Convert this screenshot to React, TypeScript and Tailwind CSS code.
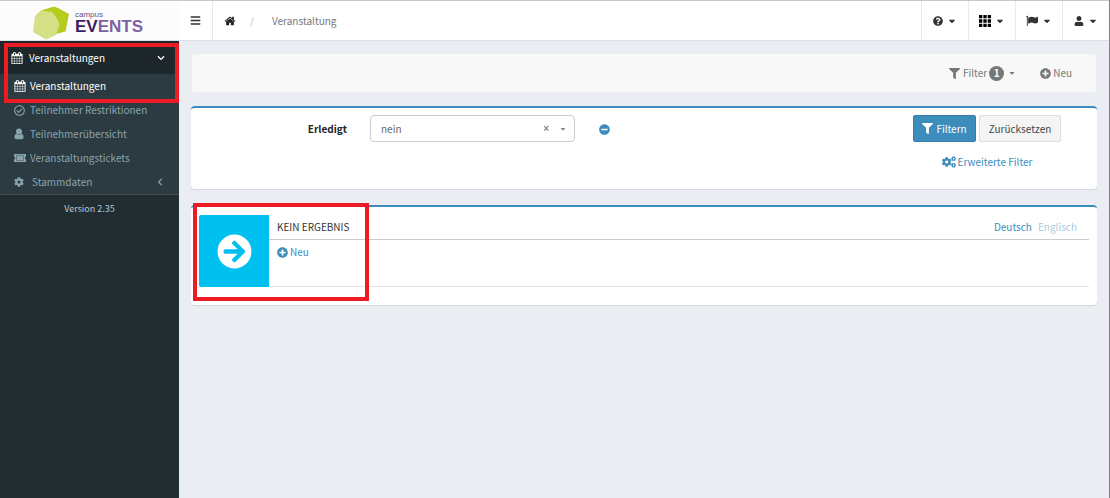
import type { ReactNode } from "react"
import {
  FaArrowCircleRight,
  FaBars,
  FaCaretDown,
  FaChevronDown,
  FaChevronLeft,
  FaCog,
  FaCogs,
  FaFilter,
  FaMinusCircle,
  FaPlusCircle,
  FaQuestionCircle,
  FaRegCheckCircle,
  FaUser,
} from "react-icons/fa"

function CalendarIcon({ className }: { className?: string }) {
  return (
    <svg viewBox="0 0 1664 1792" fill="currentColor" className={className} aria-hidden="true">
      <path d="M128 1664h288v-288h-288v288zm352 0h320v-288h-320v288zm-352-352h288v-320h-288v320zm352 0h320v-320h-320v320zm-352-384h288v-288h-288v288zm736 736h320v-288h-320v288zm-384-736h320v-288h-320v288zm768 736h288v-288h-288v288zm-384-352h320v-320h-320v320zm-352-864v-288q0-13-9.500-22.500t-22.500-9.500h-64q-13 0-22.500 9.500t-9.500 22.500v288q0 13 9.500 22.500t22.500 9.500h64q13 0 22.500-9.500t9.500-22.500zm736 864h288v-320h-288v320zm-384-384h320v-288h-320v288zm384 0h288v-288h-288v288zm32-480v-288q0-13-9.500-22.500t-22.500-9.500h-64q-13 0-22.500 9.500t-9.500 22.500v288q0 13 9.500 22.500t22.500 9.500h64q13 0 22.500-9.500t9.500-22.500zm384-64v1280q0 52-38 90t-90 38h-1408q-52 0-90-38t-38-90v-1280q0-52 38-90t90-38h128v-96q0-66 47-113t113-47h64q66 0 113 47t47 113v96h384v-96q0-66 47-113t113-47h64q66 0 113 47t47 113v96h128q52 0 90 38t38 90z" />
    </svg>
  )
}

function HomeIcon({ className }: { className?: string }) {
  return (
    <svg viewBox="0 0 1792 1792" fill="currentColor" className={className} aria-hidden="true">
      <path d="M1472 992v480q0 26-19 45t-45 19h-384v-384h-256v384h-384q-26 0-45-19t-19-45v-480q0-1 .5-3t.5-3l575-474 575 474q1 2 1 6zm223-69l-62 74q-8 9-21 11h-3q-13 0-21-7l-692-577-692 577q-12 8-24 7-13-2-21-11l-62-74q-8-10-7-23.500t11-21.500l719-599q32-26 76-26t76 26l244 204v-195q0-14 9-23t23-9h192q14 0 23 9t9 23v408l219 182q10 8 11 21.500t-7 23.500z" />
    </svg>
  )
}

function FlagIcon({ className }: { className?: string }) {
  return (
    <svg viewBox="0 0 1792 1792" fill="currentColor" className={className} aria-hidden="true">
      <path d="M320 256q0 72-64 110v1266q0 13-9.500 22.500t-22.500 9.500h-64q-13 0-22.500-9.500t-9.500-22.500v-1266q-64-38-64-110 0-53 37.500-90.500t90.500-37.500 90.500 37.500 37.500 90.500zm1472 64v763q0 25-12.500 38.500t-39.500 27.500q-215 116-369 116-61 0-123.500-22t-108.500-48-115.500-48-142.500-22q-192 0-464 146-17 9-33 9-26 0-45-19t-19-45v-742q0-32 31-55 21-14 79-43 236-120 421-120 107 0 200 29t219 88q38 19 88 19 54 0 117.500-21t110-47 88-47 54.500-21q26 0 45 19t19 45z" />
    </svg>
  )
}

function GridIcon({ className }: { className?: string }) {
  return (
    <svg viewBox="0 0 12 12" fill="currentColor" className={className} aria-hidden="true">
      <path d="M0 0h3.300v3.300H0zM4.350 0h3.300v3.300h-3.300zM8.700 0H12v3.300H8.700zM0 4.350h3.300v3.300H0zM4.350 4.350h3.300v3.300h-3.300zM8.700 4.350H12v3.300H8.700zM0 8.700h3.300V12H0zM4.350 8.700h3.300V12h-3.300zM8.700 8.700H12V12H8.700z" />
    </svg>
  )
}

function TicketIcon({ className }: { className?: string }) {
  return (
    <svg viewBox="0 0 12 8" className={className} aria-hidden="true">
      <path d="M0 0h12v2.500a1 1.500 0 0 0 0 3V8H0V5.500a1 1.500 0 0 0 0-3z" fill="currentColor" />
      <path d="M2.500 1.500h7v5h-7z" fill="none" stroke="#2c3b41" strokeWidth=".4" />
    </svg>
  )
}

function PersonIcon({ className }: { className?: string }) {
  return (
    <svg viewBox="0 0 10 12" fill="currentColor" className={className} aria-hidden="true">
      <circle cx="5" cy="3.600" r="3" />
      <path d="M2.500 5.800C1 6 .5 7.500.5 9.500c0 1 .6 1.700 1.600 1.700h5.800c1 0 1.600-.7 1.600-1.700 0-2-.5-3.500-2-3.700C6.200 7.200 3.800 7.200 2.500 5.800z" />
    </svg>
  )
}

function Logo() {
  return (
    <a href="#" aria-label="campus EVENTS" className="flex h-full items-center gap-1.5 pl-8 pt-1">
      <svg viewBox="0 0 37 34" className="h-[34px] w-[37px]" aria-hidden="true">
        <path d="M9 4.500 22 .5l4 1.500 11 6-3.500 17.500L20 29z" fill="#b5cc1c" />
        <path d="M8.500 4.500 20 6q6 6.500 7.500 13L24 29l-10 4.500L1 26 3 10z" fill="#d5df86" />
      </svg>
      <span className="flex flex-col font-['Liberation_Sans',sans-serif]">
        <span className="text-[8px] leading-2 text-[#6b4d8e]">campus</span>
        <span className="text-[17px] font-bold leading-4 text-[#7c629f]">
          <span className="text-[#3a1d63]">EV</span>ENTS
        </span>
      </span>
    </a>
  )
}

const NAV_MENUS = [
  { label: "Hilfe", icon: <FaQuestionCircle className="size-2.5" /> },
  { label: "Module", icon: <GridIcon className="size-3 text-black" /> },
  { label: "Sprache", icon: <FlagIcon className="size-3" /> },
  { label: "Benutzer", icon: <FaUser className="size-2.5" /> },
]

const SUB_ITEMS: { label: string; icon: ReactNode; active?: boolean; more?: boolean }[] = [
  { label: "Veranstaltungen", icon: <CalendarIcon className="size-3" />, active: true },
  { label: "Teilnehmer Restriktionen", icon: <FaRegCheckCircle className="size-[11px]" /> },
  { label: "Teilnehmerübersicht", icon: <PersonIcon className="h-3 w-2.5" /> },
  { label: "Veranstaltungstickets", icon: <TicketIcon className="h-2 w-3" /> },
  { label: "Stammdaten", icon: <FaCog className="size-2.5" />, more: true },
]

function Header() {
  return (
    <header className="flex h-[41px] border-b border-t border-b-[#dce0e6] border-t-[#c8c8c8] bg-white text-[#333]">
      <div className="w-[179px] shrink-0 bg-[#fcfcfc]">
        <Logo />
      </div>
      <button aria-label="Menü" className="flex w-[34px] items-center justify-center border-r border-[#e8eaee]">
        <FaBars className="size-[11px]" />
      </button>
      <nav aria-label="Pfad" className="flex flex-1 items-center pl-[11px] text-[#777]">
        <a href="#" aria-label="Startseite" className="text-[#222]">
          <HomeIcon className="size-3" />
        </a>
        <span className="w-9 pl-3.5 text-[#bbb]">/</span>
        <span>Veranstaltung</span>
      </nav>
      {NAV_MENUS.map((menu) => (
        <button
          key={menu.label}
          aria-label={menu.label}
          className="flex w-[47px] items-center justify-center gap-1 border-l border-[#e8eaee]"
        >
          {menu.icon}
          <FaCaretDown className="size-2.5" />
        </button>
      ))}
    </header>
  )
}

function Sidebar() {
  return (
    <aside className="relative w-[179px] shrink-0 bg-[#222d32] text-[#8aa4af]">
      <button className="flex h-[33px] w-full items-center bg-[#1e282c] pl-[11px] pr-3.5 text-white">
        <CalendarIcon className="mr-1.5 size-3" />
        <span className="flex-1 text-left">Veranstaltungen</span>
        <FaChevronDown className="size-2" />
      </button>
      <ul className="border-b border-[#4a4a4a] bg-[#2c3b41]">
        {SUB_ITEMS.map((item) => (
          <li key={item.label}>
            <a href="#" className={`flex h-6 items-center pl-3.5 pr-[15px] ${item.active ? "text-white" : ""}`}>
              <span className={item.more ? "w-[18px]" : "w-4"}>{item.icon}</span>
              <span className="flex-1">{item.label}</span>
              {item.more && <FaChevronLeft className="size-2" />}
            </a>
          </li>
        ))}
      </ul>
      <p className="py-1.5 text-center text-[9px] leading-4 text-[#b8c7ce]">Version 2.35</p>
      {/* Highlight around the active entry */}
      <span className="pointer-events-none absolute left-1 right-0 top-0.5 h-15 border-4 border-[#ed1c24]" />
    </aside>
  )
}

function Toolbar() {
  return (
    <div className="flex h-10 items-center justify-end gap-6 rounded-sm border border-[#eee] bg-[#f8f8f8] pr-6 text-[#777]">
      <button className="flex items-center">
        <FaFilter className="mr-[3px] size-[11px]" />
        Filter
        <span className="ml-0.5 flex size-[15px] items-center justify-center rounded-full bg-[#777] text-[10px] font-bold leading-3 text-white">
          1
        </span>
        <FaCaretDown className="ml-1 size-2" />
      </button>
      <button className="flex items-center gap-0.5">
        <FaPlusCircle className="size-[11px]" />
        Neu
      </button>
    </div>
  )
}

function FilterPanel() {
  return (
    <form className="flex min-h-[83px] items-start rounded-sm border-t-2 border-[#3c8dbc] bg-white pr-9 pt-[7px] shadow-[0_1px_1px_rgba(0,0,0,0.1)]">
      <label htmlFor="erledigt" className="w-[156px] text-right font-bold leading-7 text-[#222]">
        Erledigt
      </label>
      <div className="relative ml-[23px] w-[205px]">
        <select
          id="erledigt"
          defaultValue="nein"
          className="h-[27px] w-full appearance-none rounded-sm border border-[#ccc] bg-white pl-2.5 text-[#666]"
        >
          <option value="nein">nein</option>
          <option value="ja">ja</option>
        </select>
        <span className="pointer-events-none absolute inset-y-0 right-2 flex items-center gap-2.5 text-[#888]">
          <span className="font-['Liberation_Sans',sans-serif] font-bold">×</span>
          <FaCaretDown className="size-2" />
        </span>
      </div>
      <button type="button" aria-label="Filter entfernen" className="ml-6 flex h-7 items-center text-[#3c8dbc]">
        <FaMinusCircle className="size-[11px]" />
      </button>
      <div className="ml-auto flex flex-col items-center gap-3">
        <div className="flex gap-[3px]">
          <button
            type="button"
            className="flex h-[27px] w-[63px] items-center justify-center gap-[3px] rounded-xs border border-[#367fa9] bg-[#3c8dbc] text-white"
          >
            <FaFilter className="size-[11px]" />
            Filtern
          </button>
          <button type="reset" className="h-[27px] w-[82px] rounded-xs border border-[#ddd] bg-[#f4f4f4] text-[#444]">
            Zurücksetzen
          </button>
        </div>
        <a href="#" className="flex items-center gap-0.5 text-[#3c8dbc]">
          <FaCogs className="size-3.5" />
          Erweiterte Filter
        </a>
      </div>
    </form>
  )
}

function ResultPanel() {
  return (
    <section className="relative flex min-h-25 items-start rounded-sm border-t-2 border-[#3c8dbc] bg-white px-2 pt-2 shadow-[0_1px_1px_rgba(0,0,0,0.1)]">
      <div className="flex h-[72px] w-[70px] shrink-0 items-center justify-center rounded-l-xs bg-[#00c0ef] text-white">
        <FaArrowCircleRight className="size-[35px]" />
      </div>
      <div className="h-[72px] flex-1 border-b border-[#e4e4e4]">
        <div className="flex h-[25px] items-center gap-1.5 border-b border-[#ccc] pl-2 pr-3">
          <h2 className="flex-1 text-[#333]">KEIN ERGEBNIS</h2>
          <a href="#" className="text-[#3c8dbc]">
            Deutsch
          </a>
          <a href="#" className="text-[#a6cde4]">
            Englisch
          </a>
        </div>
        <a href="#" className="ml-2 mt-1 inline-flex items-center gap-0.5 text-[#3c8dbc]">
          <FaPlusCircle className="size-[11px]" />
          Neu
        </a>
      </div>
      {/* Highlight around the empty result */}
      <span className="pointer-events-none absolute -top-1 left-0.5 h-[98px] w-[176px] border-4 border-[#ed1c24]" />
    </section>
  )
}

export default function App() {
  return (
    <div className="flex min-h-screen flex-col border-r border-[#808080] bg-[#eaeef3] font-['Noto_Sans_CJK_SC',sans-serif] text-[10px] leading-4">
      <Header />
      <div className="flex flex-1">
        <Sidebar />
        <main className="flex-1 p-3">
          <Toolbar />
          <div className="mt-[13px] space-y-4">
            <FilterPanel />
            <ResultPanel />
          </div>
        </main>
      </div>
    </div>
  )
}
